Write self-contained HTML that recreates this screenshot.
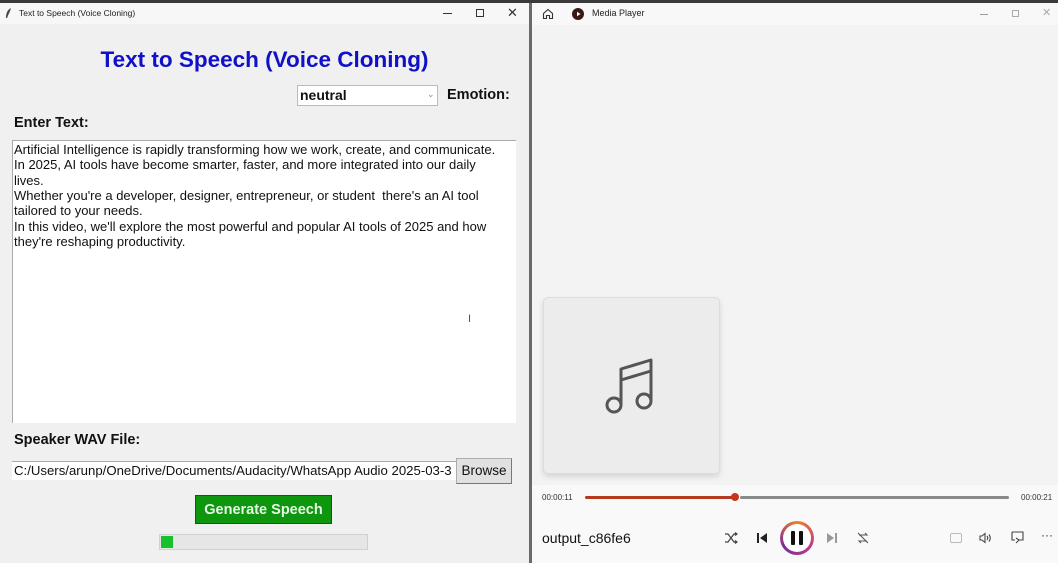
<!DOCTYPE html>
<html><head><meta charset="utf-8"><style>
*{margin:0;padding:0;box-sizing:border-box}
body{width:1058px;height:563px;overflow:hidden;position:relative;background:#f0f0f0;font-family:"Liberation Sans",Arial,sans-serif}
.abs{position:absolute}
.b{font-weight:bold}
</style></head><body>
<div class="abs" style="left:0;top:0;width:1058px;height:3px;background:#3a3a3a"></div>
<!-- left window -->
<div class="abs" style="left:0;top:3px;width:529px;height:21px;background:#f7f7f7"></div>
<svg class="abs" style="left:5px;top:7px" width="8" height="12"><path d="M6 1 C2 3 1 7 1 11 L2 11 C3 8 5 5 6 1Z" fill="#444"/></svg>
<div class="abs" style="left:19px;top:8px;font-size:8.5px;color:#222">Text to Speech (Voice Cloning)</div>
<div class="abs" style="left:443px;top:13px;width:9px;height:1px;background:#333"></div>
<div class="abs" style="left:476px;top:9px;width:8px;height:8px;border:1px solid #333"></div>
<div class="abs" style="left:507px;top:5px;font-size:13px;color:#333">✕</div>
<div class="abs b" style="left:0;width:529px;top:47px;text-align:center;font-size:22.5px;color:#1010c8">Text to Speech (Voice Cloning)</div>
<div class="abs" style="left:297px;top:85px;width:141px;height:21px;background:#fff;border:1px solid #bbb"></div>
<div class="abs b" style="left:300px;top:87px;font-size:14px;color:#111">neutral</div>
<div class="abs" style="left:427px;top:89px;font-size:9px;color:#888">⌄</div>
<div class="abs b" style="left:447px;top:87px;font-size:14.5px;color:#111">Emotion:</div>
<div class="abs b" style="left:14px;top:115px;font-size:14.5px;color:#111">Enter Text:</div>
<div class="abs" style="left:12px;top:140px;width:504px;height:283px;background:#fff;border-top:1px solid #aaa;border-left:1px solid #aaa"></div>
<div class="abs" style="left:14px;top:142px;font-size:13px;line-height:15.35px;color:#111;white-space:pre">Artificial Intelligence is rapidly transforming how we work, create, and communicate.
In 2025, AI tools have become smarter, faster, and more integrated into our daily
lives.
Whether you're a developer, designer, entrepreneur, or student  there's an AI tool
tailored to your needs.
In this video, we'll explore the most powerful and popular AI tools of 2025 and how
they're reshaping productivity.</div>
<div class="abs" style="left:468px;top:313px;font-size:11px;color:#555">I</div>
<div class="abs b" style="left:14px;top:432px;font-size:14.5px;color:#111">Speaker WAV File:</div>
<div class="abs" style="left:12px;top:461px;width:444px;height:19px;background:#fff;border-top:1px solid #aaa"></div>
<div class="abs" style="left:14px;top:463px;font-size:13.2px;color:#111;white-space:nowrap">C:/Users/arunp/OneDrive/Documents/Audacity/WhatsApp Audio 2025-03-3</div>
<div class="abs" style="left:456px;top:458px;width:56px;height:26px;background:#e1e1e1;border:1px solid #adadad;border-right-color:#777;border-bottom-color:#777;font-size:13.5px;color:#111;text-align:center;line-height:24px">Browse</div>
<div class="abs b" style="left:195px;top:495px;width:137px;height:29px;background:#0f960f;border:1px solid #0a600a;color:#e8f8e8;font-size:14.5px;text-align:center;line-height:28px">Generate Speech</div>
<div class="abs" style="left:159px;top:534px;width:209px;height:16px;background:#e6e6e6;border:1px solid #d0d0d0"></div>
<div class="abs" style="left:161px;top:536px;width:12px;height:12px;background:#17c12c"></div>
<!-- divider -->
<div class="abs" style="left:529px;top:3px;width:3px;height:560px;background:#6a6a6a"></div>
<!-- right window -->
<div class="abs" style="left:532px;top:3px;width:526px;height:560px;background:#f3f3f3"></div>
<div class="abs" style="left:532px;top:3px;width:526px;height:22px;background:#f8f8f8"></div>
<svg class="abs" style="left:542px;top:8px" width="12" height="12" viewBox="0 0 12 12"><path d="M1.5 5.5 L6 1.5 L10.5 5.5 V10.5 H7.5 V7.5 H4.5 V10.5 H1.5Z" fill="none" stroke="#333" stroke-width="1.1"/></svg>
<div class="abs" style="left:572px;top:8px;width:12px;height:12px;border-radius:50%;background:#3a1818"></div>
<svg class="abs" style="left:572px;top:8px" width="12" height="12"><path d="M5 3.8 L8.5 6 L5 8.2Z" fill="#fff"/></svg>
<div class="abs" style="left:592px;top:8px;font-size:9px;color:#222">Media Player</div>
<div class="abs" style="left:980px;top:14px;width:8px;height:1px;background:#999"></div>
<div class="abs" style="left:1012px;top:10px;width:7px;height:7px;border:1px solid #aaa"></div>
<div class="abs" style="left:1042px;top:6px;font-size:11px;color:#aaa">✕</div>
<div class="abs" style="left:543px;top:297px;width:177px;height:177px;background:#ececec;border:1px solid #dcdcdc;border-radius:5px;box-shadow:0 3px 6px rgba(0,0,0,.12)"></div>
<svg class="abs" style="left:600px;top:355px" width="60" height="65" viewBox="0 0 60 65"><g fill="none" stroke="#555" stroke-width="3" stroke-linejoin="round"><circle cx="14" cy="50" r="7"/><circle cx="44" cy="46" r="7"/><path d="M21 50 V14 L51 5 V46 M21 25 L51 16"/></g></svg>
<div class="abs" style="left:532px;top:485px;width:526px;height:78px;background:#f9f9f9"></div>
<div class="abs" style="left:542px;top:493px;font-size:8px;color:#333">00:00:11</div>
<div class="abs" style="left:1021px;top:493px;font-size:8px;color:#333">00:00:21</div>
<div class="abs" style="left:585px;top:496px;width:150px;height:3px;background:#b23a1e;border-radius:2px"></div>
<div class="abs" style="left:740px;top:496px;width:269px;height:3px;background:#8a8a8a;border-radius:2px"></div>
<div class="abs" style="left:731px;top:493px;width:8px;height:8px;border-radius:50%;background:#c6351c"></div>
<div class="abs" style="left:542px;top:530px;font-size:14px;color:#111">output_c86fe6</div>
<svg class="abs" style="left:724px;top:532px" width="14" height="12" viewBox="0 0 14 12"><g fill="none" stroke="#444" stroke-width="1.2"><path d="M1 2 H4 L10 10 H13 M1 10 H4 L10 2 H13 M11 0.5 L13 2 L11 3.5 M11 8.5 L13 10 L11 11.5"/></g></svg>
<svg class="abs" style="left:756px;top:532px" width="12" height="12"><rect x="1" y="1" width="2" height="10" fill="#222"/><path d="M11 1 L4 6 L11 11Z" fill="#222"/></svg>
<div class="abs" style="left:780px;top:521px;width:34px;height:34px;border-radius:50%;background:conic-gradient(#e8822a,#c23a8c,#7a2a9a,#e8822a)"></div>
<div class="abs" style="left:783px;top:524px;width:28px;height:28px;border-radius:50%;background:#fff"></div>
<div class="abs" style="left:791px;top:531px;width:4px;height:14px;background:#111;border-radius:1px"></div>
<div class="abs" style="left:799px;top:531px;width:4px;height:14px;background:#111;border-radius:1px"></div>
<svg class="abs" style="left:826px;top:532px" width="12" height="12"><path d="M1 1 L8 6 L1 11Z" fill="#999"/><rect x="9" y="1" width="2" height="10" fill="#999"/></svg>
<svg class="abs" style="left:856px;top:531px" width="14" height="14" viewBox="0 0 14 14"><g fill="none" stroke="#555" stroke-width="1.1"><path d="M3 4 H11 L9 2 M11 10 H3 L5 12 M2 2 L12 12"/></g></svg>
<div class="abs" style="left:950px;top:533px;width:12px;height:10px;border:1px solid #bbb;border-radius:2px"></div>
<svg class="abs" style="left:979px;top:532px" width="14" height="12" viewBox="0 0 14 12"><g fill="none" stroke="#444" stroke-width="1.1"><path d="M1 4 H3 L6 1.5 V10.5 L3 8 H1Z"/><path d="M8 4 Q9.5 6 8 8 M10 2.5 Q12.5 6 10 9.5"/></g></svg>
<svg class="abs" style="left:1011px;top:531px" width="13" height="13"><path d="M1 1 H12 V9 H8 M1 1 V9 H4 M5 12 L8 9 L5 7" fill="none" stroke="#444" stroke-width="1.1"/></svg>
<div class="abs" style="left:1041px;top:528px;font-size:12px;color:#333">···</div>
</body></html>
